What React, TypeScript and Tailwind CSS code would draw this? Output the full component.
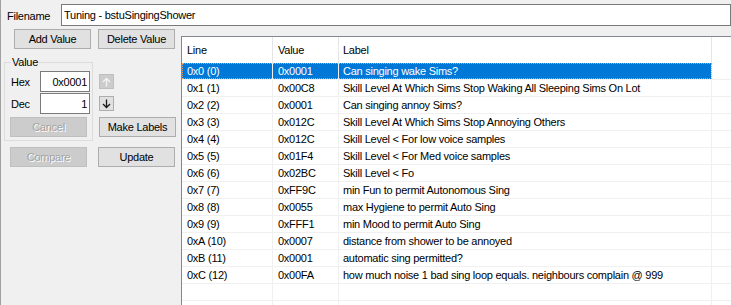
import React from "react";

const rows: [string, string, string][] = [
  ["0x0 (0)", "0x0001", "Can singing wake Sims?"],
  ["0x1 (1)", "0x00C8", "Skill Level At Which Sims Stop Waking All Sleeping Sims On Lot"],
  ["0x2 (2)", "0x0001", "Can singing annoy Sims?"],
  ["0x3 (3)", "0x012C", "Skill Level At Which Sims Stop Annoying Others"],
  ["0x4 (4)", "0x012C", "Skill Level < For low voice samples"],
  ["0x5 (5)", "0x01F4", "Skill Level < For Med voice samples"],
  ["0x6 (6)", "0x02BC", "Skill Level < Fo"],
  ["0x7 (7)", "0xFF9C", "min Fun to permit Autonomous Sing"],
  ["0x8 (8)", "0x0055", "max Hygiene to permit Auto Sing"],
  ["0x9 (9)", "0xFFF1", "min Mood to permit Auto Sing"],
  ["0xA (10)", "0x0007", "distance from shower to be annoyed"],
  ["0xB (11)", "0x0001", "automatic sing permitted?"],
  ["0xC (12)", "0x00FA", "how much noise 1 bad sing loop equals. neighbours complain @ 999"],
];

function Btn({ label, w, disabled, className = "" }: { label: string; w: string; disabled?: boolean; className?: string }) {
  return (
    <div
      className={`${w} h-[20px] flex items-center justify-center border ${
        disabled
          ? "bg-[#cccccc] border-[#bfbfbf] text-[#a3a3a3] [text-shadow:1px_1px_0_#ffffff]"
          : "bg-[#e1e1e1] border-[#adadad] text-black"
      } ${className}`}
    >
      {label}
    </div>
  );
}

function Arrow({ up, disabled }: { up?: boolean; disabled?: boolean }) {
  return (
    <div
      className={`w-[15px] h-[15px] flex items-center justify-center border ${
        disabled ? "bg-[#cccccc] border-[#bfbfbf]" : "bg-[#e1e1e1] border-[#adadad]"
      }`}
    >
      <svg width="9" height="10" viewBox="0 0 9 10">
        {up ? (
          <path d="M4.5 1.5 V9.5 M1 5 L4.5 1.5 L8 5" stroke={disabled ? "#f4f4f4" : "#1a1a1a"} strokeWidth="1.3" fill="none" />
        ) : (
          <path d="M4.5 0.5 V8.5 M1 5 L4.5 8.5 L8 5" stroke={disabled ? "#f4f4f4" : "#1a1a1a"} strokeWidth="1.3" fill="none" />
        )}
      </svg>
    </div>
  );
}

export default function App() {
  const empty = 4;
  return (
    <div className="w-[731px] h-[305px] bg-[#f0f0f0] border-l border-[#a0a0a0] overflow-hidden flex flex-col font-['Liberation_Sans',Arial,sans-serif] text-[11px] tracking-[-0.25px] text-black leading-[14px]">
      {/* Filename row */}
      <div className="flex items-center pt-[4px]">
        <div className="w-[60px] pl-[6px] pt-[1px]">Filename</div>
        <div className="flex-1 h-[22px] bg-white border border-[#7a7a7a] flex items-center pl-[2px]">
          Tuning - bstuSingingShower
        </div>
      </div>

      <div className="flex flex-1 min-h-0">
        {/* Left panel */}
        <div className="w-[180px] flex flex-col">
          <div className="flex pl-[13px] mt-[3px]">
            <Btn label="Add Value" w="w-[77px]" />
            <Btn label="Delete Value" w="w-[77px]" className="ml-[7px]" />
          </div>

          <div className="flex items-start mt-[6px]">
            <fieldset className="ml-[3px] w-[89px] border border-[#dcdcdc] pb-[3px]">
              <legend className="ml-[6px] px-[1px] leading-[14px]">Value</legend>
              <div className="flex items-center mt-[2px] pl-[6px]">
                <div className="w-[29px]">Hex</div>
                <div className="w-[50px] h-[21px] bg-white border border-[#7a7a7a] flex items-center justify-end pr-[2px]">
                  0x0001
                </div>
              </div>
              <div className="flex items-center mt-[1px] pl-[6px]">
                <div className="w-[29px]">Dec</div>
                <div className="w-[50px] h-[21px] bg-white border border-[#7a7a7a] flex items-center justify-end pr-[2px]">
                  1
                </div>
              </div>
              <Btn label="Cancel" w="w-[77px]" disabled className="ml-[5px] mt-[3px]" />
            </fieldset>
            <div className="flex flex-col ml-[6px]">
              <div className="mt-[19px]">
                <Arrow up disabled />
              </div>
              <div className="mt-[7px]">
                <Arrow />
              </div>
              <Btn label="Make Labels" w="w-[77px]" className="mt-[6px]" />
            </div>
          </div>

          <div className="flex pl-[9px] mt-[6px]">
            <Btn label="Compare" w="w-[77px]" disabled />
            <Btn label="Update" w="w-[77px]" className="ml-[11px]" />
          </div>
        </div>

        {/* List */}
        <div className="flex-1 mt-[10px] bg-white border-l border-t border-[#828790] overflow-hidden">
          <div className="flex h-[26px]">
            <div className="w-[91px] border-r border-[#e5e5e5] pl-[5px] flex items-center">Line</div>
            <div className="w-[66px] border-r border-[#e5e5e5] pl-[5px] flex items-center">Value</div>
            <div className="w-[373px] border-r border-[#e5e5e5] pl-[4px] flex items-center">Label</div>
            <div className="flex-1" />
          </div>
          {rows.map((r, i) => {
            const sel = i === 0;
            return (
              <div key={i} className="flex h-[17px] border-b border-[#f0f0f0]">
                <div
                  className={`flex ${
                    sel ? "bg-[#0078d7] text-white outline-1 outline-dotted outline-[#f0a050] -outline-offset-1" : ""
                  }`}
                >
                  <div className="w-[91px] border-r border-[#f0f0f0] pl-[5px] flex items-center whitespace-nowrap">{r[0]}</div>
                  <div className="w-[66px] border-r border-[#f0f0f0] pl-[5px] flex items-center whitespace-nowrap">{r[1]}</div>
                  <div className="w-[373px] border-r border-[#f0f0f0] pl-[4px] flex items-center whitespace-nowrap overflow-hidden">{r[2]}</div>
                </div>
                <div className="flex-1" />
              </div>
            );
          })}
          {Array.from({ length: empty }).map((_, i) => (
            <div key={"e" + i} className="flex h-[17px] border-b border-[#f0f0f0]">
              <div className="w-[91px] border-r border-[#f0f0f0]" />
              <div className="w-[66px] border-r border-[#f0f0f0]" />
              <div className="w-[373px] border-r border-[#f0f0f0]" />
              <div className="flex-1" />
            </div>
          ))}
        </div>
      </div>
    </div>
  );
}
